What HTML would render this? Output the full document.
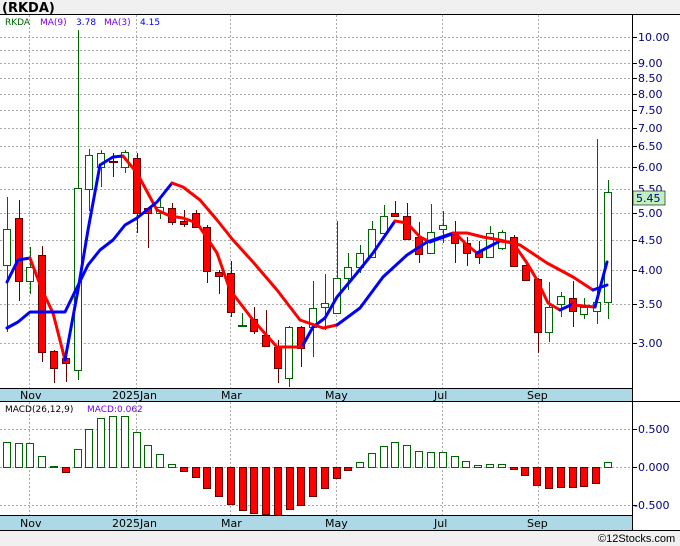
<!DOCTYPE html>
<html><head><meta charset="utf-8"><style>
html,body{margin:0;padding:0;background:#f0f0f0;}
svg{display:block;font-family:"DejaVu Sans","Liberation Sans",sans-serif;}
</style></head><body>
<svg width="680" height="546" viewBox="0 0 680 546" xmlns="http://www.w3.org/2000/svg">
<rect x="0" y="0" width="680" height="546" fill="#f0f0f0"/>
<text x="2" y="12" font-size="13" font-weight="bold" fill="#000">(RKDA)</text>
<rect x="0" y="14" width="680" height="516" fill="#fff"/>
<line x1="0" y1="14.5" x2="680" y2="14.5" stroke="#000"/>
<g stroke="#aaa" stroke-dasharray="2,2" stroke-width="1">
<line x1="0" x2="632" y1="37.5" y2="37.5"/><line x1="0" x2="632" y1="50.5" y2="50.5"/><line x1="0" x2="632" y1="63.5" y2="63.5"/><line x1="0" x2="632" y1="78.5" y2="78.5"/><line x1="0" x2="632" y1="94.5" y2="94.5"/><line x1="0" x2="632" y1="110.5" y2="110.5"/><line x1="0" x2="632" y1="128.5" y2="128.5"/><line x1="0" x2="632" y1="146.5" y2="146.5"/><line x1="0" x2="632" y1="167.5" y2="167.5"/><line x1="0" x2="632" y1="189.5" y2="189.5"/><line x1="0" x2="632" y1="213.5" y2="213.5"/><line x1="0" x2="632" y1="240.5" y2="240.5"/><line x1="0" x2="632" y1="270.5" y2="270.5"/><line x1="0" x2="632" y1="304.5" y2="304.5"/><line x1="0" x2="632" y1="343.5" y2="343.5"/>
<line x1="29.5" x2="29.5" y1="15" y2="388"/><line x1="136.5" x2="136.5" y1="15" y2="388"/><line x1="230.5" x2="230.5" y1="15" y2="388"/><line x1="336.5" x2="336.5" y1="15" y2="388"/><line x1="442.5" x2="442.5" y1="15" y2="388"/><line x1="538.5" x2="538.5" y1="15" y2="388"/>
</g>
<g font-size="11" fill="#000080">
<text x="638" y="41">10.00</text><text x="638" y="67">9.00</text><text x="638" y="82">8.50</text><text x="638" y="98">8.00</text><text x="638" y="114">7.50</text><text x="638" y="132">7.00</text><text x="638" y="150">6.50</text><text x="638" y="171">6.00</text><text x="638" y="193">5.50</text><text x="638" y="217">5.00</text><text x="638" y="244">4.50</text><text x="638" y="274">4.00</text><text x="638" y="308">3.50</text><text x="638" y="347">3.00</text>
</g>
<g stroke="#000"><line x1="632" x2="637" y1="37.5" y2="37.5"/><line x1="632" x2="637" y1="63.5" y2="63.5"/><line x1="632" x2="637" y1="78.5" y2="78.5"/><line x1="632" x2="637" y1="94.5" y2="94.5"/><line x1="632" x2="637" y1="110.5" y2="110.5"/><line x1="632" x2="637" y1="128.5" y2="128.5"/><line x1="632" x2="637" y1="146.5" y2="146.5"/><line x1="632" x2="637" y1="167.5" y2="167.5"/><line x1="632" x2="637" y1="213.5" y2="213.5"/><line x1="632" x2="637" y1="240.5" y2="240.5"/><line x1="632" x2="637" y1="270.5" y2="270.5"/><line x1="632" x2="637" y1="304.5" y2="304.5"/><line x1="632" x2="637" y1="343.5" y2="343.5"/></g>
<line x1="632.5" y1="14" x2="632.5" y2="530" stroke="#000"/>
<rect x="633" y="191" width="32" height="14" fill="#c0f0c0" stroke="#000" stroke-width="0.6"/>
<text x="636" y="202" font-size="11" fill="#000080">5.45</text>
<g font-size="9">
<text x="5" y="25" fill="#006400">RKDA</text><text x="40" y="25" fill="#7000ff">MA(9)</text><text x="76" y="25" fill="#0000ff">3.78</text><text x="104" y="25" fill="#7000ff">MA(3)</text><text x="140" y="25" fill="#0000ff">4.15</text>
</g>
<g stroke-width="1">
<g stroke="#006400" fill="#fff">
<line x1="7.5" y1="197" x2="7.5" y2="332"/><rect x="3.5" y="229.5" width="7" height="36"/>
<line x1="30.5" y1="247" x2="30.5" y2="294"/><rect x="26.5" y="267.5" width="7" height="14"/>
<line x1="78.5" y1="30" x2="78.5" y2="380"/><rect x="74.5" y="188.5" width="7" height="182"/>
<line x1="89.5" y1="149" x2="89.5" y2="211"/><rect x="85.5" y="155.5" width="7" height="34"/>
<line x1="101.5" y1="150" x2="101.5" y2="187"/><rect x="97.5" y="153.5" width="7" height="14"/>
<line x1="125.5" y1="150" x2="125.5" y2="173"/><rect x="121.5" y="152.5" width="7" height="15"/>
<line x1="160.5" y1="199" x2="160.5" y2="219"/><rect x="156.5" y="207.5" width="7" height="6"/>
<line x1="242.5" y1="313" x2="242.5" y2="327"/><line x1="238" y1="326" x2="247" y2="326" stroke-width="2"/>
<line x1="289.5" y1="326" x2="289.5" y2="387"/><rect x="285.5" y="327.5" width="7" height="51"/>
<line x1="313.5" y1="281" x2="313.5" y2="357"/><rect x="309.5" y="308.5" width="7" height="19"/>
<line x1="325.5" y1="274" x2="325.5" y2="330"/><rect x="321.5" y="303.5" width="7" height="4"/>
<line x1="337.5" y1="221" x2="337.5" y2="313"/><rect x="333.5" y="278.5" width="7" height="35"/>
<line x1="348.5" y1="253" x2="348.5" y2="290"/><rect x="344.5" y="267.5" width="7" height="11"/>
<line x1="360.5" y1="245" x2="360.5" y2="273"/><rect x="356.5" y="253.5" width="7" height="14"/>
<line x1="372.5" y1="221" x2="372.5" y2="257"/><rect x="368.5" y="229.5" width="7" height="28"/>
<line x1="384.5" y1="205" x2="384.5" y2="233"/><rect x="380.5" y="216.5" width="7" height="17"/>
<line x1="431.5" y1="204" x2="431.5" y2="254"/><rect x="427.5" y="232.5" width="7" height="21"/>
<line x1="443.5" y1="211" x2="443.5" y2="243"/><rect x="439.5" y="225.5" width="7" height="4"/>
<line x1="490.5" y1="226" x2="490.5" y2="258"/><rect x="486.5" y="233.5" width="7" height="24"/>
<line x1="502.5" y1="230" x2="502.5" y2="250"/><rect x="498.5" y="232.5" width="7" height="16"/>
<line x1="549.5" y1="282" x2="549.5" y2="342"/><rect x="545.5" y="307.5" width="7" height="25"/>
<line x1="561.5" y1="292" x2="561.5" y2="317"/><rect x="557.5" y="296.5" width="7" height="8"/>
<line x1="584.5" y1="298" x2="584.5" y2="319"/><rect x="580.5" y="307.5" width="7" height="7"/>
<line x1="597.5" y1="139" x2="597.5" y2="324"/><rect x="593.5" y="302.5" width="7" height="9"/>
<line x1="608.5" y1="180" x2="608.5" y2="319"/><rect x="604.5" y="192.5" width="7" height="110"/>
</g>
<g stroke="#600" fill="#f00">
<line x1="19.5" y1="200" x2="19.5" y2="301"/><rect x="15.5" y="218.5" width="7" height="63"/>
<line x1="42.5" y1="246" x2="42.5" y2="362"/><rect x="38.5" y="255.5" width="7" height="97"/>
<line x1="54.5" y1="350" x2="54.5" y2="383"/><rect x="50.5" y="351.5" width="7" height="17"/>
<line x1="66.5" y1="353" x2="66.5" y2="382"/><rect x="62.5" y="358.5" width="7" height="5"/>
<line x1="113.5" y1="153" x2="113.5" y2="177"/><line x1="109" y1="162" x2="118" y2="162" stroke-width="2"/>
<line x1="137.5" y1="153" x2="137.5" y2="233"/><rect x="133.5" y="158.5" width="7" height="55"/>
<line x1="148.5" y1="208" x2="148.5" y2="248"/><rect x="144.5" y="208.5" width="7" height="5"/>
<line x1="172.5" y1="203" x2="172.5" y2="225"/><rect x="168.5" y="208.5" width="7" height="14"/>
<line x1="184.5" y1="210" x2="184.5" y2="227"/><rect x="180.5" y="221.5" width="7" height="3"/>
<line x1="196.5" y1="210" x2="196.5" y2="228"/><rect x="192.5" y="213.5" width="7" height="14"/>
<line x1="207.5" y1="225" x2="207.5" y2="283"/><rect x="203.5" y="227.5" width="7" height="44"/>
<line x1="219.5" y1="270" x2="219.5" y2="294"/><rect x="215.5" y="272.5" width="7" height="4"/>
<line x1="231.5" y1="261" x2="231.5" y2="317"/><rect x="227.5" y="273.5" width="7" height="39"/>
<line x1="254.5" y1="307" x2="254.5" y2="334"/><rect x="250.5" y="319.5" width="7" height="12"/>
<line x1="266.5" y1="310" x2="266.5" y2="346"/><rect x="262.5" y="335.5" width="7" height="11"/>
<line x1="278.5" y1="340" x2="278.5" y2="383"/><rect x="274.5" y="347.5" width="7" height="21"/>
<line x1="301.5" y1="326" x2="301.5" y2="367"/><rect x="297.5" y="327.5" width="7" height="21"/>
<line x1="395.5" y1="201" x2="395.5" y2="216"/><rect x="391.5" y="213.5" width="7" height="3"/>
<line x1="407.5" y1="203" x2="407.5" y2="239"/><rect x="403.5" y="216.5" width="7" height="23"/>
<line x1="419.5" y1="222" x2="419.5" y2="263"/><rect x="415.5" y="237.5" width="7" height="17"/>
<line x1="455.5" y1="221" x2="455.5" y2="263"/><rect x="451.5" y="233.5" width="7" height="10"/>
<line x1="467.5" y1="237" x2="467.5" y2="266"/><rect x="463.5" y="243.5" width="7" height="10"/>
<line x1="479.5" y1="241" x2="479.5" y2="264"/><rect x="475.5" y="251.5" width="7" height="6"/>
<line x1="514.5" y1="235" x2="514.5" y2="267"/><rect x="510.5" y="237.5" width="7" height="29"/>
<line x1="526.5" y1="264" x2="526.5" y2="280"/><rect x="522.5" y="265.5" width="7" height="15"/>
<line x1="538.5" y1="278" x2="538.5" y2="353"/><rect x="534.5" y="279.5" width="7" height="53"/>
<line x1="573.5" y1="281" x2="573.5" y2="327"/><rect x="569.5" y="298.5" width="7" height="13"/>
</g>
</g>
<g fill="none" stroke-width="3" stroke-linejoin="round" stroke-linecap="round">
<polyline stroke="#00f" points="7,282 18,260 30,258"/>
<polyline stroke="#f00" points="30,258 42,290 53,313 65,360"/>
<polyline stroke="#00f" points="65,360 78,290 88,230 100,165 113,157 123,156"/>
<polyline stroke="#f00" points="123,156 137,173 157,210 170,216 183,218 197,223 217,253 230,290 253,320 277,347 300,347"/>
<polyline stroke="#00f" points="303,345 313,327 325,318 337,297 357,273 373,253 395,221"/>
<polyline stroke="#f00" points="395,221 407,223 420,237 430,242"/>
<polyline stroke="#00f" points="430,242 455,233"/>
<polyline stroke="#f00" points="455,233 467,245 477,253"/>
<polyline stroke="#00f" points="477,253 500,241"/>
<polyline stroke="#f00" points="500,241 513,243 527,263 537,280 548,303 560,310"/>
<polyline stroke="#00f" points="560,310 573,304"/>
<polyline stroke="#f00" points="573,305 595,307"/>
<polyline stroke="#00f" points="595,307 607,262"/>
<polyline stroke="#00f" points="7,328 18,322 30,312 65,312 88,265 100,250 113,240 125,225 137,218 157,202 172,183"/>
<polyline stroke="#f00" points="172,183 183,187 200,200 217,220 233,240 253,262 277,290 300,320 323,328 337,325"/>
<polyline stroke="#00f" points="337,325 360,308 383,277 407,255 427,242 453,233"/>
<polyline stroke="#f00" points="453,233 467,233 483,237 500,240 520,245 547,263 573,277 593,290"/>
<polyline stroke="#00f" points="593,290 607,285"/>
</g>
<rect x="0" y="388" width="632" height="14" fill="#add8e6"/>
<line x1="0" y1="388.5" x2="632" y2="388.5" stroke="#000"/>
<g font-size="11" fill="#000">
<text x="20" y="399">Nov</text><text x="112" y="399">2025Jan</text><text x="221" y="399">Mar</text><text x="325" y="399">May</text><text x="434" y="399">Jul</text><text x="527" y="399">Sep</text>
</g>
<line x1="0" y1="401.5" x2="680" y2="401.5" stroke="#000"/>
<g stroke="#aaa" stroke-dasharray="2,2">
<line x1="0" x2="632" y1="429.5" y2="429.5"/><line x1="0" x2="632" y1="467.5" y2="467.5"/><line x1="0" x2="632" y1="505.5" y2="505.5"/>
<line x1="29.5" x2="29.5" y1="402" y2="516"/><line x1="136.5" x2="136.5" y1="402" y2="516"/><line x1="230.5" x2="230.5" y1="402" y2="516"/><line x1="336.5" x2="336.5" y1="402" y2="516"/><line x1="442.5" x2="442.5" y1="402" y2="516"/><line x1="538.5" x2="538.5" y1="402" y2="516"/>
</g>
<g font-size="9"><text x="5" y="412" fill="#000">MACD(26,12,9)</text><text x="87" y="412" fill="#7000ff">MACD:0.062</text></g>
<g font-size="11" fill="#000080"><text x="638" y="433">0.500</text><text x="638" y="471">0.000</text><text x="634" y="509">-0.500</text></g>
<g stroke="#000"><line x1="632" x2="637" y1="429.5" y2="429.5"/><line x1="632" x2="637" y1="467.5" y2="467.5"/><line x1="632" x2="637" y1="505.5" y2="505.5"/></g>
<g stroke="#006400" fill="#fff">
<rect x="3.5" y="442.5" width="7" height="25"/><rect x="15.5" y="443.5" width="7" height="24"/><rect x="26.5" y="443.5" width="7" height="24"/><rect x="38.5" y="456.5" width="7" height="11"/><rect x="50.5" y="466.5" width="7" height="1"/>
<rect x="74.5" y="449.5" width="7" height="18"/><rect x="85.5" y="429.5" width="7" height="38"/><rect x="97.5" y="418.5" width="7" height="49"/><rect x="109.5" y="416.5" width="7" height="51"/><rect x="121.5" y="416.5" width="7" height="51"/><rect x="133.5" y="432.5" width="7" height="35"/><rect x="144.5" y="445.5" width="7" height="22"/><rect x="156.5" y="454.5" width="7" height="13"/><rect x="168.5" y="464.5" width="7" height="3"/>
<rect x="356.5" y="462.5" width="7" height="5"/><rect x="368.5" y="453.5" width="7" height="14"/><rect x="380.5" y="446.5" width="7" height="21"/><rect x="391.5" y="442.5" width="7" height="25"/><rect x="403.5" y="445.5" width="7" height="22"/><rect x="415.5" y="451.5" width="7" height="16"/><rect x="427.5" y="452.5" width="7" height="15"/><rect x="439.5" y="452.5" width="7" height="15"/><rect x="451.5" y="456.5" width="7" height="11"/><rect x="462.5" y="461.5" width="7" height="6"/><rect x="474.5" y="465.5" width="7" height="2"/><rect x="486.5" y="464.5" width="7" height="3"/><rect x="498.5" y="464.5" width="7" height="3"/><rect x="604.5" y="462.5" width="7" height="5"/>
</g>
<g stroke="#600" fill="#f00">
<rect x="62.5" y="467.5" width="7" height="5"/>
<rect x="180.5" y="467.5" width="7" height="4"/><rect x="192.5" y="467.5" width="7" height="10"/><rect x="203.5" y="467.5" width="7" height="21"/><rect x="215.5" y="467.5" width="7" height="29"/><rect x="227.5" y="467.5" width="7" height="37"/><rect x="239.5" y="467.5" width="7" height="43"/><rect x="250.5" y="467.5" width="7" height="46"/><rect x="262.5" y="467.5" width="7" height="47"/><rect x="274.5" y="467.5" width="7" height="48"/><rect x="286.5" y="467.5" width="7" height="42"/><rect x="297.5" y="467.5" width="7" height="38"/><rect x="309.5" y="467.5" width="7" height="29"/><rect x="321.5" y="467.5" width="7" height="21"/><rect x="333.5" y="467.5" width="7" height="11"/><rect x="344.5" y="467.5" width="7" height="3"/>
<rect x="510.5" y="467.5" width="7" height="2"/><rect x="521.5" y="467.5" width="7" height="8"/><rect x="533.5" y="467.5" width="7" height="18"/><rect x="545.5" y="467.5" width="7" height="21"/><rect x="557.5" y="467.5" width="7" height="20"/><rect x="569.5" y="467.5" width="7" height="20"/><rect x="580.5" y="467.5" width="7" height="19"/><rect x="592.5" y="467.5" width="7" height="16"/>
</g>
<rect x="0" y="516" width="632" height="14" fill="#add8e6"/>
<line x1="0" y1="515.5" x2="632" y2="515.5" stroke="#000"/>
<line x1="0" y1="530.5" x2="680" y2="530.5" stroke="#000"/>
<g font-size="11" fill="#000">
<text x="20" y="527">Nov</text><text x="112" y="527">2025Jan</text><text x="221" y="527">Mar</text><text x="325" y="527">May</text><text x="434" y="527">Jul</text><text x="527" y="527">Sep</text>
</g>
<text x="598" y="542" font-size="11" fill="#000" font-family="Liberation Sans, sans-serif">©12Stocks.com</text>
</svg>
</body></html>
